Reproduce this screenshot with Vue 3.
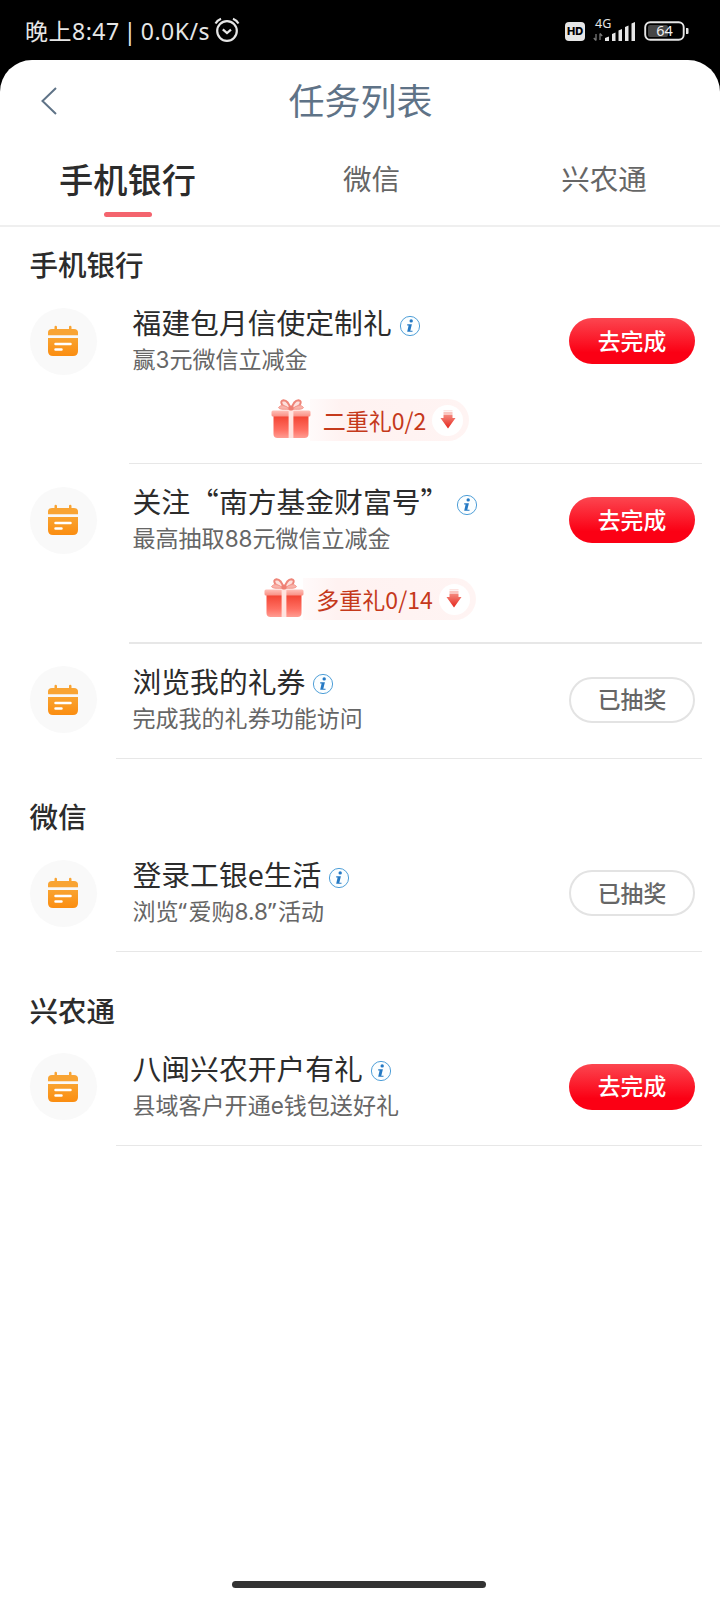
<script setup>
const tabs = ['手机银行', '微信', '兴农通']

const sections = [
  {
    title: '手机银行',
    tasks: [
      { title: '福建包月信使定制礼', sub: '赢3元微信立减金', gift: '二重礼0/2', done: false },
      { title: '关注“南方基金财富号”', sub: '最高抽取88元微信立减金', gift: '多重礼0/14', done: false },
      { title: '浏览我的礼券', sub: '完成我的礼券功能访问', done: true },
    ],
  },
  {
    title: '微信',
    tasks: [{ title: '登录工银e生活', sub: '浏览“爱购8.8”活动', done: true }],
  },
  {
    title: '兴农通',
    tasks: [{ title: '八闽兴农开户有礼', sub: '县域客户开通e钱包送好礼', done: false }],
  },
]

// Splits a subtitle into runs so digits, latin letters and quotes get the latin face.
const runs = (text) =>
  text.split(/([0-9a-z.]+|[“”])/).filter(Boolean).map((t) => ({
    t,
    cls: /[“”]/.test(t) ? 'quote' : /[0-9a-z]/.test(t) ? 'latin' : '',
  }))
</script>

<template>
  <div class="phone" lang="zh-CN">
    <div class="status">
      <span class="time">晚上8:47 | 0.0K/s</span>
      <svg class="alarm" width="26" height="26" viewBox="0 0 26 26" fill="none" stroke="#e6e6e6">
        <circle cx="13" cy="14" r="9.8" stroke-width="2.2" />
        <path d="M1.5 6.5Q3.5 3.2 7 1.8M24.5 6.5Q22.5 3.2 19 1.8" stroke-width="2.2" />
        <path d="M8.8 12.3L13 16L17 12.6" stroke-width="2.2" />
      </svg>
      <div class="spacer"></div>
      <span class="hd">HD</span>
      <div class="network">
        <span class="gen">4G</span>
        <svg width="44" height="26" viewBox="0 0 44 26">
          <g fill="none" stroke="#777" stroke-width="1.3">
            <path d="M3 22.5V16M3 22.5L.8 20M7 15.5V22M7 15.500L9.2 18" />
          </g>
          <path d="M12 23v-3l4-1.500V23zM19 23v-7l3.500-1.500V23zM25.500 23V12.500L29 11V23zM32 23V9l3.500-1.500V23zM38.500 23V5.500L42 4v19z" fill="#e6e6e6" />
        </svg>
      </div>
      <svg class="battery" width="46" height="20" viewBox="0 0 46 20">
        <rect x="1.2" y="1.2" width="38.5" height="17.6" rx="5" fill="none" stroke="#e6e6e6" stroke-width="1.9" />
        <rect x="4" y="4" width="20" height="12" rx="2" fill="#464646" />
        <text x="20.5" y="15.2" text-anchor="middle" font-family="Noto Sans" font-size="14.5" fill="#efefef">64</text>
        <path d="M42 7h1.500q1 0 1 1v4q0 1-1 1H42z" fill="#e6e6e6" />
      </svg>
    </div>

    <main class="sheet">
      <header class="header">
        <svg class="back" width="18" height="30" viewBox="0 0 18 30" fill="none" stroke="#5f7387" stroke-width="2">
          <path d="M15 2L1.500 15L15 28" />
        </svg>
        <h1>任务列表</h1>
      </header>

      <nav class="tabs">
        <div v-for="(tab, i) in tabs" :key="tab" class="tab" :class="{ active: i === 0 }">
          <span>{{ tab }}</span>
        </div>
      </nav>

      <section v-for="section in sections" :key="section.title" class="section">
        <h2>{{ section.title }}</h2>
        <article v-for="task in section.tasks" :key="task.title" class="task">
          <div class="row">
            <div class="avatar">
              <svg width="32" height="32" viewBox="0 0 32 32">
                <defs>
                  <linearGradient id="cal" x1="0" y1="0" x2="0" y2="1">
                    <stop offset="0" stop-color="#f9a330" />
                    <stop offset="1" stop-color="#fb8d10" />
                  </linearGradient>
                </defs>
                <path d="M1 10.200V7.500Q1 4 5 4H7.500V2Q7.500 .8 8.700 .8T10 2V4H22V2Q22 .8 23.200 .8T24.500 2V4H27Q31 4 31 7.500V10.200Z" fill="#f9a433" />
                <path d="M1 13H31V26Q31 31 26 31H6Q1 31 1 26Z" fill="url(#cal)" />
                <path d="M8.500 19H23.500M8.500 24.500H14.500" stroke="#fff" stroke-width="2.500" stroke-linecap="round" />
              </svg>
            </div>
            <div class="copy">
              <div class="title">
                <span>{{ task.title }}</span>
                <svg width="22" height="22" viewBox="0 0 22 22">
                  <circle cx="11" cy="11" r="9.600" fill="#fbfeff" stroke="#4f9fd8" stroke-width="1" />
                  <circle cx="12.200" cy="5.900" r="1.700" fill="#2479c4" />
                  <path d="M8.200 9.200H12.900L11.300 15.700H13.500V16.700H8.200L9.600 10.400H8.200Z" fill="#2479c4" />
                </svg>
              </div>
              <div class="sub"><span v-for="(r, k) in runs(task.sub)" :key="k" :class="r.cls">{{ r.t }}</span></div>
            </div>
            <button :class="{ done: task.done }">{{ task.done ? '已抽奖' : '去完成' }}</button>
          </div>
          <div v-if="task.gift" class="gift">
            <svg class="box" width="40" height="42" viewBox="0 0 40 42">
              <defs>
                <linearGradient id="body" x1="0" y1="0" x2="0" y2="1">
                  <stop offset="0" stop-color="#f2402f" />
                  <stop offset=".65" stop-color="#ff6f62" />
                  <stop offset="1" stop-color="#ff9d93" />
                </linearGradient>
                <linearGradient id="lid" x1="0" y1="0" x2="0" y2="1">
                  <stop offset="0" stop-color="#ffc0b8" />
                  <stop offset="1" stop-color="#f98f84" />
                </linearGradient>
              </defs>
              <path d="M2.500 16H37.500V35Q37.500 39 33.500 39H6.500Q2.500 39 2.500 35Z" fill="url(#body)" />
              <rect x=".5" y="11.500" width="39" height="6" rx="1.500" fill="url(#lid)" />
              <rect x="17.600" y="11.500" width="4.800" height="27.500" fill="#ffe3df" />
              <path d="M19.500 10Q17.500 1.500 12.500 1.200Q9 2 11 5.500Q14 9.500 19.500 10Q26 9.500 29 5.500Q31 2 27.500 1.200Q22.500 1.500 20.500 10Z" fill="#fde0dc" stroke="#ee8579" stroke-width="2" />
              <path d="M18.500 9.500Q11 4 7.500 8.500Q8 11 18.500 10ZM21.500 9.500Q29 4 32.500 8.500Q32 11 21.500 10Z" fill="#f9b3aa" stroke="#f4978c" stroke-width="1" />
              <circle cx="20" cy="9" r="2.600" fill="#ef7e72" />
            </svg>
            <div class="pill">
              <span>{{ task.gift }}</span>
              <div class="dot">
                <svg width="18" height="20" viewBox="0 0 18 20">
                  <defs>
                    <linearGradient id="arrow" x1="0" y1="0" x2="0" y2="1">
                      <stop offset="0" stop-color="#f58a7f" />
                      <stop offset="1" stop-color="#e5261c" />
                    </linearGradient>
                  </defs>
                  <rect x="4.500" y="0" width="9" height="1.500" fill="#fde4e1" />
                  <rect x="4.500" y="2" width="9" height="2" fill="#fac6c0" />
                  <path d="M4.500 4.500H13.500V8H16.500L9 18.500L1.500 8H4.500Z" fill="url(#arrow)" />
                </svg>
              </div>
            </div>
          </div>
        </article>
      </section>

      <div class="home"></div>
    </main>
  </div>
</template>

<style>
body {
  margin: 0;
  background: #000;
}
</style>

<style scoped>
.phone {
  width: 720px;
  height: 1600px;
  display: flex;
  flex-direction: column;
  background: #000;
  overflow: hidden;
  font-family: "Noto Sans CJK SC", sans-serif;
  color: #2c2c2c;
}
.status {
  height: 60px;
  flex: none;
  box-sizing: border-box;
  padding: 2px 30px 0 25px;
  display: flex;
  align-items: center;
  color: #e6e6e6;
}
.time {
  font-family: "Noto Sans", "Noto Sans CJK SC", sans-serif;
  font-size: 23px;
  letter-spacing: 0.500px;
  word-spacing: -2.500px;
  line-height: 60px;
  white-space: nowrap;
  width: 186px;
}
.alarm {
  margin-left: 3px;
  margin-bottom: 2px;
}
.spacer {
  flex: 1;
}
.hd {
  width: 20px;
  height: 19px;
  margin-right: 8px;
  border-radius: 4px;
  background: #e6e6e6;
  color: #000;
  font: 800 11px/19px Inter, sans-serif;
  text-align: center;
}
.network {
  display: grid;
  margin-right: 7px;
}
.network > * {
  grid-area: 1 / 1;
}
.gen {
  align-self: start;
  margin: -3px 0 0 2px;
  font: 12.500px/18px "Noto Sans", sans-serif;
}
.sheet {
  flex: 1;
  min-height: 0;
  display: flex;
  flex-direction: column;
  background: #fff;
  border-radius: 32px 32px 0 0;
}
.header {
  height: 81px;
  flex: none;
  display: grid;
  grid-template-columns: 100px 1fr 100px;
  align-items: center;
}
.back {
  margin-left: 41px;
}
h1 {
  margin: 0;
  padding-left: 1px;
  font-size: 36px;
  line-height: 77px;
  height: 80px;
  font-weight: 400;
  text-align: center;
  color: #5f7387;
}
.tabs {
  height: 86px;
  flex: none;
  box-sizing: border-box;
  display: grid;
  grid-template-columns: 255px 233px 1fr;
  border-bottom: 2px solid #efefef;
}
.tab {
  display: flex;
  flex-direction: column;
  align-items: center;
  font-size: 28.500px;
  line-height: 74px;
  color: #666;
}
.tab.active {
  font-size: 34.200px;
  font-weight: 500;
  color: #2c2c2c;
}
.tab.active::after {
  content: "";
  width: 48px;
  height: 5px;
  margin-top: -3px;
  border-radius: 3px;
  background: #f4646e;
}
.section + .section {
  padding-top: 20.300px;
}
h2 {
  margin: 0;
  padding-left: 29.500px;
  height: 58.200px;
  font-size: 28.500px;
  line-height: 74px;
  font-weight: 500;
}
.task {
  margin-right: 18px;
}
.task::after {
  content: "";
  display: block;
  height: 1.200px;
  margin-left: 129px;
  background: #e7e7e7;
}
.task:last-child::after {
  margin-left: 116px;
}
.row {
  box-sizing: border-box;
  height: 114px;
  padding-bottom: 2px;
  display: flex;
  align-items: center;
}
.avatar {
  width: 67px;
  height: 67px;
  margin-left: 29.500px;
  border-radius: 50%;
  background: #f9f9f9;
  display: flex;
  align-items: center;
  justify-content: center;
}
.copy {
  flex: 1;
  margin: -3px 0 0 36px;
}
.title {
  display: flex;
  align-items: center;
  font-size: 28.800px;
  line-height: 37px;
  height: 37px;
  white-space: nowrap;
}
.title svg {
  margin: 8px 0 0 7px;
}
.sub {
  font-size: 23.040px;
  line-height: 36px;
  height: 36px;
  color: #666;
  white-space: nowrap;
}
.latin {
  font-family: Inter, sans-serif;
  font-size: 22.500px;
}
.quote {
  font-family: "Noto Sans", sans-serif;
  letter-spacing: 1.700px;
}
button {
  box-sizing: border-box;
  width: 126px;
  height: 46px;
  margin: 0 7px 0 0;
  padding: 0 0 2px;
  border: 0;
  border-radius: 23px;
  background: linear-gradient(#fc4650, #fb0014 75%);
  color: #fff;
  font: 500 22.800px/43px "Noto Sans CJK SC", sans-serif;
}
button.done {
  border: 2px solid #e3e3e3;
  background: #fff;
  color: #666;
  line-height: 39px;
}
.gift {
  height: 64px;
  display: flex;
  align-items: flex-start;
  justify-content: center;
  padding-left: 38px;
}
.box {
  position: relative;
  z-index: 1;
}
.pill {
  height: 42px;
  display: flex;
  align-items: center;
  margin-left: -1px;
  padding: 0 6px 0 13px;
  border-radius: 0 21px 21px 0;
  background: linear-gradient(90deg, #fffafa, #fff2f1 20%, #fff4f3);
  color: #c5391b;
  font-size: 23.040px;
  line-height: 42px;
}
.dot {
  width: 31px;
  height: 31px;
  margin-left: 6px;
  border-radius: 50%;
  background: #fff;
  display: flex;
  align-items: center;
  justify-content: center;
}
.home {
  width: 254px;
  height: 7px;
  margin: auto auto 12px 231.500px;
  border-radius: 4px;
  background: #333;
}
</style>
